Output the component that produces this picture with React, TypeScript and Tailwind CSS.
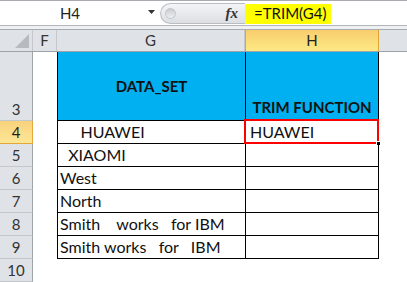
const font = { fontFamily: 'Lato, "Open Sans", sans-serif' };

function RowHead({ n, active = false, tall = false }: { n: number; active?: boolean; tall?: boolean }) {
  return (
    <div
      className={`w-[33px] shrink-0 flex items-end justify-center text-[15px] leading-none pb-[3px] border-r border-b ${
        active
          ? 'bg-gradient-to-b from-[#f8d27c] to-[#fde796] border-[#e5a73a] text-[#222]'
          : 'bg-[#dfe2e6] border-r-[#9ea3a8] border-b-[#c4c8cd] text-[#333]'
      } ${tall ? 'h-[69px]' : 'h-[23px]'}`}
    >
      {n}
    </div>
  );
}

function DataRow({ n, g, h = '', active = false }: { n: number; g: string; h?: string; active?: boolean }) {
  return (
    <div className="flex h-[23px]">
      <RowHead n={n} active={active} />
      <div className="w-[24px] shrink-0" />
      <div className="w-[189px] shrink-0 border-l border-r border-b border-black pl-[2px] flex items-end pb-[3px] text-[16px] leading-none whitespace-pre text-[#111]">
        {g}
      </div>
      <div className="relative w-[133px] shrink-0 border-r border-b border-black pl-[4px] flex items-end pb-[3px] text-[16px] leading-none text-[#111]">
        {h}
        {active && (
          <>
            <div className="absolute -left-[2px] -top-[2px] -right-[1px] -bottom-[1px] border-2 border-[#ff0000]" />
            <div className="absolute -right-[3px] -bottom-[3px] w-[5px] h-[5px] bg-black border border-white" />
          </>
        )}
      </div>
    </div>
  );
}

export default function App() {
  return (
    <div className="w-[407px] h-[282px] overflow-hidden bg-white" style={font}>
      {/* formula bar */}
      <div className="border-t border-[#a8acb1]">
        <div className="flex h-[24px] bg-white">
          <div className="w-[160px] relative flex items-center justify-center text-[15px] text-[#222]">
            <span className="-ml-[20px]">H4</span>
            <svg className="absolute left-[148px] top-[9px]" width="7" height="5" viewBox="0 0 7 5">
              <path d="M0 0h7L3.5 4z" fill="#333" />
            </svg>
          </div>
          <div className="w-[85px] mt-[2px] h-[21px] rounded-l-full border border-r-0 border-[#b9bdc2] bg-gradient-to-b from-[#f3f4f6] to-[#dcdfe3] flex items-center justify-between pl-[4px] pr-[7px]">
            <div className="w-[11px] h-[11px] rounded-full bg-gradient-to-b from-[#c8cbd0] to-[#eef0f2] border border-[#c2c5ca]" />
            <span className="text-[15px] italic font-bold text-[#333]" style={{ fontFamily: '"Liberation Serif", serif' }}>
              fx
            </span>
          </div>
          <div className="flex-1 flex items-center pt-[1px]">
            <span className="bg-[#ffff00] h-[20px] pl-[9px] pr-[5px] flex items-center text-[15px] text-[#111]">=TRIM(G4)</span>
          </div>
        </div>
        <div className="h-[1px] bg-[#b3b7bc]" />
        <div className="h-[3px] bg-[#eef0f2]" />
        <div className="h-[1px] bg-[#a9adb2]" />
      </div>

      {/* column headers */}
      <div className="flex h-[22px] bg-[#dfe2e6] border-b border-[#9ea3a8] text-[15px] text-[#333]">
        <div className="w-[33px] shrink-0 border-r border-[#c4c8cd] relative">
          <svg className="absolute right-[3px] bottom-[3px]" width="14" height="14" viewBox="0 0 14 14">
            <path d="M14 0V14H0z" fill="#b7bbc0" />
          </svg>
        </div>
        <div className="w-[24px] shrink-0 border-r border-[#c4c8cd] flex items-center justify-center">F</div>
        <div className="w-[188px] shrink-0 border-r border-[#c4c8cd] flex items-center justify-center">G</div>
        <div className="w-[134px] shrink-0 border-x border-[#e2a52e] bg-gradient-to-b from-[#f8cd6d] to-[#fde985] flex items-center justify-center text-[#222]">
          H
        </div>
        <div className="flex-1" />
      </div>

      {/* row 3 */}
      <div className="flex h-[69px]">
        <RowHead n={3} tall />
        <div className="w-[24px] shrink-0" />
        <div className="w-[189px] shrink-0 border-l border-r border-b border-black bg-[#00b0f0] flex items-center justify-center font-bold text-[15px] text-[#111] pt-[1px]">
          DATA_SET
        </div>
        <div className="w-[133px] shrink-0 border-r border-b border-black bg-[#00b0f0] flex items-end justify-center pb-[5px] font-bold text-[15px] leading-none text-[#111]">
          TRIM FUNCTION
        </div>
      </div>

      <DataRow n={4} g="     HUAWEI" h="HUAWEI" active />
      <DataRow n={5} g="  XIAOMI" />
      <DataRow n={6} g="West" />
      <DataRow n={7} g="North" />
      <DataRow n={8} g="Smith    works   for IBM" />
      <DataRow n={9} g="Smith works   for   IBM" />
      <div className="flex h-[23px]">
        <RowHead n={10} />
      </div>
    </div>
  );
}
